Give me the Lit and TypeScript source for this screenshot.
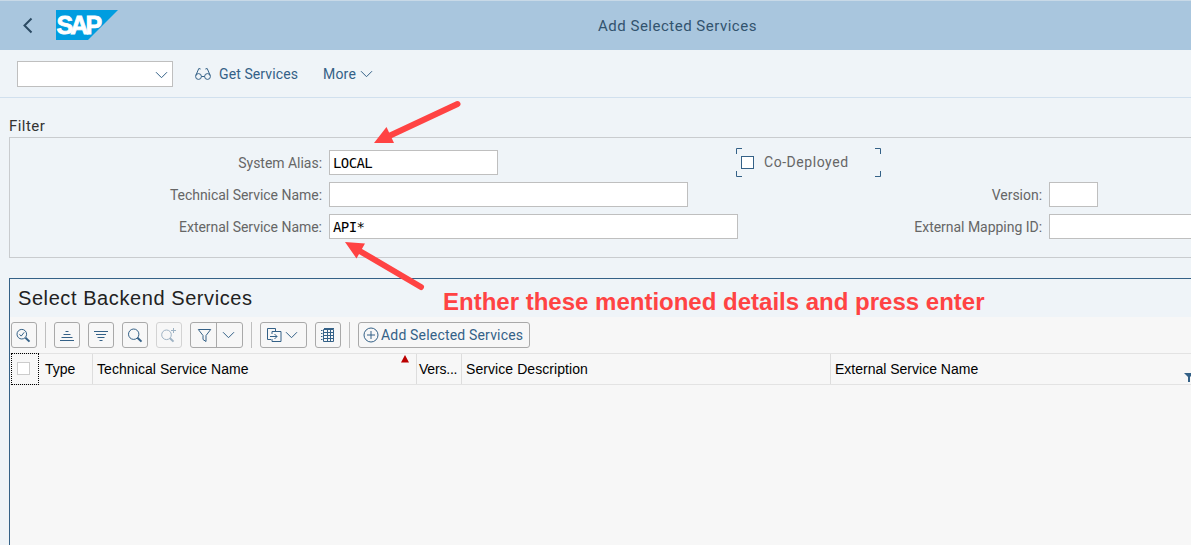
import { LitElement, html, css, svg } from "lit";
import { customElement } from "lit/decorators.js";
import { styleMap } from "lit/directives/style-map.js";

const chevron = html`<svg width="13" height="8" viewBox="0 0 13 8"><path d="M1 1.200 6.500 6.700 12 1.200" /></svg>`;

const glyphs: Record<string, unknown> = {
  details: svg`<circle cx="10.800" cy="12.200" r="4.800"/><path d="M8.500 12.300l1.700 1.800 3-3.800"/><path d="M14.500 15.700l4 3.900" stroke-width="2"/>`,
  asc: svg`<path d="M11.500 9.500h3M9.500 12.500h7M7.500 15.500h11M6 18.500h14"/>`,
  desc: svg`<path d="M6 9.500h14M8 12.500h10M9.500 15.500h7M11.500 18.500h3"/>`,
  find: svg`<circle cx="11.700" cy="12.200" r="5.200"/><path d="M15.500 15.700l4 3.900" stroke-width="2"/>`,
  findMore: svg`<circle cx="10.500" cy="12.800" r="4.800"/><path d="M14 16.200l3.500 3.400" stroke-width="2"/><path d="M17.500 6v5M15 8.500h5"/>`,
  filter: svg`<path d="M8.300 7.500h12.400l-4.700 6v6l-3-2v-4z"/>`,
  exportTo: svg`<path d="M11 17.500H7.500v-11h8v3M12 12V9.500h9v10h-9V17M10 14.500h7M14.500 12l2.500 2.500-2.500 2.500"/>`,
  grid: svg`<path d="M8.500 7.500h10v12h-10zM8.500 10.500h10M8.500 13.500h10M8.500 16.500h10M12.500 7.500v12M15.500 7.500v12M6 8.500h1.500M6 11.500h1.500M6 14.500h1.500M6 17.500h1.500M9 6.500h10"/>`,
};

const icon = (name: string) => html`<svg class="icon" width="26" height="26" viewBox="0 0 26 26">${glyphs[name]}</svg>`;

@customElement("app-root")
export class AppRoot extends LitElement {
  static styles = css`
    :host { display: block; position: relative; width: 100%; height: 545px; overflow: hidden; background: #eff4f8; font-family: Roboto, sans-serif; font-size: 14px; color: #666; }
    * { box-sizing: border-box; }
    svg { display: block; flex: none; fill: none; stroke: #346187; stroke-width: 1; }
    .shell { height: 50px; display: grid; grid-template-columns: 1fr auto 1fr; align-items: center; background: #a9c6de; border-top: 1px solid #c8d9e7; color: #32536e; }
    .brand { display: flex; align-items: center; padding: 0 0 1px 22px; gap: 22px; }
    .logo-text { fill: #fff; stroke: #fff; stroke-width: .8; font: bold 25px "Liberation Sans", sans-serif; letter-spacing: -2.9px; }
    .title { font-size: 15px; letter-spacing: .5px; position: relative; left: 82px; }
    .tools { height: 48px; display: flex; align-items: center; padding-left: 17px; border-bottom: 1px solid #d1e0ee; color: #346187; }
    .combo { width: 156px; height: 26px; background: #fff; border: 1px solid #bfbfbf; display: flex; align-items: center; justify-content: flex-end; padding: 2px 4px 0 0; margin-right: 22px; }
    .get { margin: 0 25px 0 8px; letter-spacing: .1px; }
    .more { margin-right: 4px; letter-spacing: .2px; }
    .group-title { height: 39px; padding: 18px 0 0 9px; font-size: 15px; line-height: 20px; color: #333; letter-spacing: .45px; }
    .group { height: 121px; margin-left: 9px; border: 1px solid #c9cccf; border-right: 0; display: grid; grid-template-columns: 319px 409px 311px 1fr; grid-template-rows: repeat(3, 25px); row-gap: 7px; padding-top: 12px; overflow: hidden; }
    .label { justify-self: end; padding-right: 7px; line-height: 26px; white-space: nowrap; letter-spacing: -.03px; }
    .field { height: 25px; background: #fff; border: 1px solid #bfbfbf; padding-left: 3px; line-height: 24px; color: #000; font-family: "DejaVu Sans Mono", monospace; font-size: 14px; letter-spacing: -.6px; }
    .check { grid-column: 3 / 5; justify-self: start; width: 145px; height: 29px; margin: -2px 0 0 -2px; display: flex; align-items: center; position: relative; padding-left: 5px; gap: 10px; letter-spacing: .55px; }
    .check-label { padding-bottom: 2px; }
    .box { width: 13px; height: 13px; background: #fff; border: 1px solid #346187; }
    .corners { position: absolute; left: 0; top: 0; }
    .panel { height: 267px; margin: 20px 0 0 9px; border: solid #346187; border-width: 1px 0 0 1px; background: #f7f7f7; font-family: "Liberation Sans", Arial, sans-serif; color: #000; }
    .panel-title { height: 38px; line-height: 38px; padding-left: 8px; background: #eff4f8; font-size: 20px; letter-spacing: .58px; color: #222; }
    .bar { height: 36px; display: flex; align-items: center; padding: 0 0 0 1px; gap: 8px; }
    .btn { height: 26px; min-width: 26px; border: 1px solid #a9a9a9; border-radius: 3px; display: flex; align-items: center; color: #346187; font-family: Roboto, sans-serif; }
    .btn .icon { margin: -1px; }
    .dim { opacity: .45; }
    .sep { width: 1px; height: 26px; background: #bfbfbf; }
    .split { width: 53px; }
    .half { border-left: 1px solid #a9a9a9; height: 24px; width: 25px; margin-left: 1px; padding-right: 1px; display: grid; place-items: center; }
    .menu { width: 47px; }
    .add { width: 172px; padding-left: 4px; gap: 2px; white-space: nowrap; letter-spacing: .18px; }
    .head { height: 32px; display: flex; border: solid #e3e3e3; border-width: 1px 0; padding-left: 1px; }
    .cell { position: relative; border-right: 1px solid #ddd; padding-left: 4px; line-height: 31px; white-space: nowrap; flex: none; }
    .type { padding-left: 5px; }
    .version { padding-left: 2px; letter-spacing: -.2px; }
    .wide { letter-spacing: .07px; }
    .pick { flex: none; width: 28px; border: 1px dotted #000; margin: -1px 1px -1px 0; display: flex; align-items: center; padding-left: 5px; }
    .pick .box { border-color: #ccc; margin-top: -1px; }
    .sort { position: absolute; right: 7px; top: 1px; }
    .mark { position: absolute; right: -3px; top: 19px; }
    .arrows { position: absolute; inset: 0; }
    .note { position: absolute; left: 443px; top: 288px; font: bold 24px/28px "Liberation Sans", Arial, sans-serif; color: #ff4343; white-space: nowrap; }
  `;

  private field(width: number, value = "") {
    return html`<div class="field" style=${styleMap({ width: `${width}px` })}>${value}</div>`;
  }

  private column(label: string, width: number, kind = "", extra: unknown = "") {
    return html`<div class="cell ${kind}" style=${styleMap({ width: `${width}px` })}>${label}${extra}</div>`;
  }

  render() {
    return html`
      <header class="shell">
        <div class="brand">
          <svg width="12" height="18" viewBox="0 0 12 18"><path d="M9.500 2.500 2.500 9.500l7 7" stroke="#2b4a63" stroke-width="2"/></svg>
          <svg width="62" height="30" viewBox="0 0 62 30"><path d="M0 0h62L32 30H0z" fill="#009de0" stroke="none"/><text class="logo-text" x=".5" y="23.500">SAP</text></svg>
        </div>
        <div class="title">Add Selected Services</div>
      </header>
      <div class="tools">
        <div class="combo">${chevron}</div>
        <svg width="16" height="14" viewBox="0 0 16 14"><circle cx="3.500" cy="9.500" r="2.900"/><circle cx="12.500" cy="9.500" r="2.900"/><path d="M6.400 9.500h3.200M.8 8.500 3.800 1.500l1.800.5M15.200 8.500l-3-7-1.800.5"/></svg>
        <span class="get">Get Services</span><span class="more">More</span>${chevron}
      </div>
      <div class="group-title">Filter</div>
      <section class="group">
        <div class="label">System Alias:</div>${this.field(169, "LOCAL")}
        <div class="check"><svg class="corners" width="145" height="29" viewBox="0 0 145 29"><path d="M.5 6V.5H6M139 .5h5.500V6M.5 23v5.500H6M139 28.500h5.500V23"/></svg><span class="box"></span><span class="check-label">Co-Deployed</span></div>
        <div class="label">Technical Service Name:</div>${this.field(359)}
        <div class="label">Version:</div>${this.field(49)}
        <div class="label">External Service Name:</div>${this.field(409, "API*")}
        <div class="label">External Mapping ID:</div>${this.field(160)}
      </section>
      <section class="panel">
        <div class="panel-title">Select Backend Services</div>
        <div class="bar">
          <div class="btn">${icon("details")}</div><i class="sep"></i>
          <div class="btn">${icon("asc")}</div><div class="btn">${icon("desc")}</div>
          <div class="btn">${icon("find")}</div><div class="btn dim">${icon("findMore")}</div>
          <div class="btn split">${icon("filter")}<span class="half">${chevron}</span></div><i class="sep"></i>
          <div class="btn menu">${icon("exportTo")}${chevron}</div>
          <div class="btn">${icon("grid")}</div><i class="sep"></i>
          <div class="btn add"><svg width="16" height="16" viewBox="0 0 16 16"><circle cx="8" cy="8" r="7"/><path d="M8 4v8M4 8h8"/></svg>Add Selected Services</div>
        </div>
        <div class="head">
          <div class="pick"><span class="box"></span></div>
          ${this.column("Type", 53, "type")}
          ${this.column("Technical Service Name", 324, "wide", html`<svg class="sort" width="8" height="8"><path d="M4 0l4 7.500H0z" fill="#b00" stroke="none"/></svg>`)}
          ${this.column("Vers...", 45, "version")}
          ${this.column("Service Description", 369, "wide")}
          ${this.column("External Service Name", 361, "", html`<svg class="mark" width="10" height="9"><path d="M0 0h10L6 4v5H4V4z" fill="#346187" stroke="none"/></svg>`)}
        </div>
      </section>
      <svg class="arrows" width="1191" height="300" viewBox="0 0 1191 300">
        <g stroke="#ff4343" stroke-width="6" stroke-linecap="round"><path d="M457.500 104 388 136.500M421 287l-63-37"/></g>
        <g fill="#ff4343" stroke="none"><path d="M374 143l12.500-16 7.500 16zM345 242l20 1.500-8.500 15z"/></g>
      </svg>
      <div class="note">Enther these mentioned details and press enter</div>
    `;
  }
}
